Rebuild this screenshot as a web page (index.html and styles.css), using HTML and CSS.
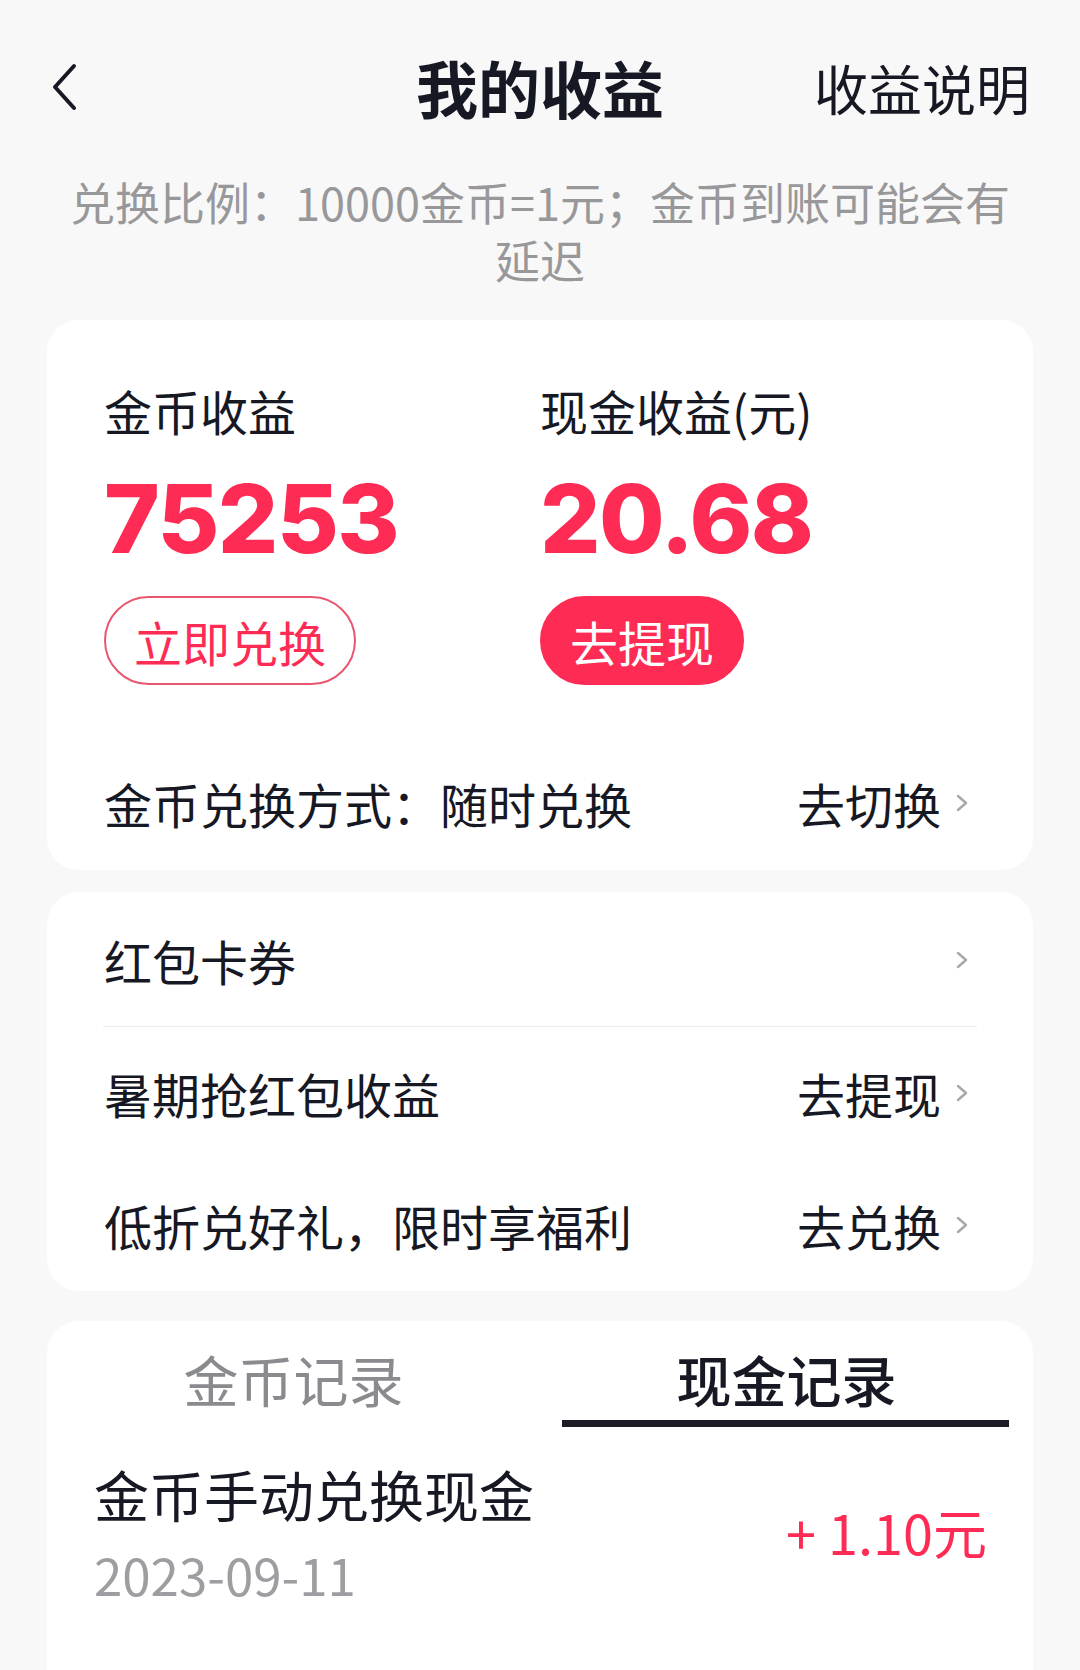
FILE: index.html
```html
<!DOCTYPE html>
<html lang="zh-CN">
<head>
  <meta charset="UTF-8" />
  <meta name="viewport" content="width=device-width, initial-scale=1" />
  <title>我的收益</title>
  <link rel="stylesheet" href="styles.css">
</head>
<body>
  <div class="topbar">
    <a class="back" href="#">
      <svg width="30" height="48" viewBox="0 0 30 48"><polyline points="24,3 5,24 24,45" fill="none" stroke="#161823" stroke-width="4" stroke-linecap="round" stroke-linejoin="round"/></svg>
    </a>
    <h1>我的收益</h1>
    <a class="help" href="#">收益说明</a>
  </div>

  <p class="hint">兑换比例：10000金币=1元；金币到账可能会有延迟</p>

  <div class="card summary">
    <div class="cols">
      <div class="col">
        <div class="label">金币收益</div>
        <div class="num">75253</div>
        <button class="btn outline">立即兑换</button>
      </div>
      <div class="col">
        <div class="label">现金收益(元)</div>
        <div class="num">20.68</div>
        <button class="btn solid">去提现</button>
      </div>
    </div>
    <div class="row">
      <span>金币兑换方式：随时兑换</span>
      <span class="go">去切换<svg width="12" height="18" viewBox="0 0 12 18"><polyline points="2,2 10,9 2,16" fill="none" stroke="#a8a8ab" stroke-width="2.4" stroke-linecap="round" stroke-linejoin="round"/></svg></span>
    </div>
  </div>

  <div class="card menu">
    <div class="row first">
      <span>红包卡券</span>
      <span class="go"><svg width="12" height="18" viewBox="0 0 12 18"><polyline points="2,2 10,9 2,16" fill="none" stroke="#a8a8ab" stroke-width="2.4" stroke-linecap="round" stroke-linejoin="round"/></svg></span>
    </div>
    <div class="divider"></div>
    <div class="row">
      <span>暑期抢红包收益</span>
      <span class="go">去提现<svg width="12" height="18" viewBox="0 0 12 18"><polyline points="2,2 10,9 2,16" fill="none" stroke="#a8a8ab" stroke-width="2.4" stroke-linecap="round" stroke-linejoin="round"/></svg></span>
    </div>
    <div class="row">
      <span>低折兑好礼，限时享福利</span>
      <span class="go">去兑换<svg width="12" height="18" viewBox="0 0 12 18"><polyline points="2,2 10,9 2,16" fill="none" stroke="#a8a8ab" stroke-width="2.4" stroke-linecap="round" stroke-linejoin="round"/></svg></span>
    </div>
  </div>

  <div class="card records">
    <div class="tabs">
      <div class="tab">金币记录</div>
      <div class="tab active">现金记录</div>
    </div>
    <div class="record">
      <div>
        <div class="rec-title">金币手动兑换现金</div>
        <div class="rec-date">2023-09-11</div>
      </div>
      <div class="rec-amount">+ 1.10元</div>
    </div>
  </div>
</body>
</html>
```

FILE: styles.css
```css
body {
  font-family: "Noto Sans CJK SC", sans-serif;
  background: #f8f8f8;
  color: #161823;
  margin: 0;
  padding: 0;
}
.topbar {
  display: grid;
  grid-template-columns: 1fr auto 1fr;
  align-items: center;
  height: 110px;
  margin-top: 32px;
  padding: 0 50px 0 50px;
}
.back {
  display: flex;
  align-items: center;
}
.topbar h1 {
  margin: 0;
  font-size: 62px;
  font-weight: bold;
  line-height: 110px;
}
.help {
  justify-self: end;
  font-size: 54px;
  color: #161823;
  text-decoration: none;
}
.hint {
  margin: 31px 0 31px;
  padding: 0 60px;
  text-align: center;
  font-size: 45px;
  line-height: 58px;
  color: #98989b;
}
.card {
  background: #fff;
  margin: 0 47px;
  border-radius: 32px;
}
.summary {
  padding: 62px 0 17px;
}
.cols {
  display: grid;
  grid-template-columns: 1fr 1fr;
  padding: 0 57px;
}
.label {
  font-size: 48px;
  line-height: 56px;
}
.num {
  margin-top: 26px;
  font-family: Inter, sans-serif;
  font-weight: 800;
  font-size: 95px;
  line-height: 110px;
  letter-spacing: -1.5px;
  color: #fe2c55;
}
.btn {
  margin-top: 22px;
  height: 89px;
  padding: 0 28px;
  border: 2px solid #fe2c55;
  border-radius: 45px;
  font-family: "Noto Sans CJK SC", sans-serif;
  font-size: 48px;
  cursor: pointer;
}
.outline {
  background: #fff;
  color: #fe2c55;
  border-color: #e8576e;
}
.solid {
  background: #fe2c55;
  color: #fff;
}
.row {
  display: flex;
  justify-content: space-between;
  align-items: center;
  height: 132px;
  padding: 0 65px 0 57px;
  font-size: 48px;
}
.summary .row {
  height: 100px;
  margin-top: 68px;
}
.go {
  display: flex;
  align-items: center;
  gap: 15px;
}
.menu {
  margin-top: 22px;
  padding-top: 2px;
}
.divider {
  height: 1px;
  background: #ececec;
  margin: 0 56px;
}
.records {
  margin-top: 30px;
  padding-bottom: 120px;
  border-radius: 32px 32px 0 0;
}
.tabs {
  display: grid;
  grid-template-columns: 1fr 1fr;
}
.tab {
  padding-top: 25px;
  text-align: center;
  font-size: 55px;
  line-height: 64px;
  color: #8a8b8f;
}
.tab.active {
  color: #161823;
  font-weight: 500;
}
.tab.active::after {
  content: "";
  display: block;
  height: 7px;
  margin: 10px 24px 0 22px;
  background: #1c1d26;
}
.record {
  display: flex;
  justify-content: space-between;
  align-items: center;
  margin-top: 33px;
  padding: 0 46px 0 47px;
}
.rec-title {
  font-size: 55px;
  line-height: 66px;
}
.rec-date {
  margin-top: 18px;
  font-size: 51px;
  line-height: 60px;
  color: #9e9ea2;
}
.rec-amount {
  font-size: 54px;
  line-height: 60px;
  color: #fe2c55;
}
```
